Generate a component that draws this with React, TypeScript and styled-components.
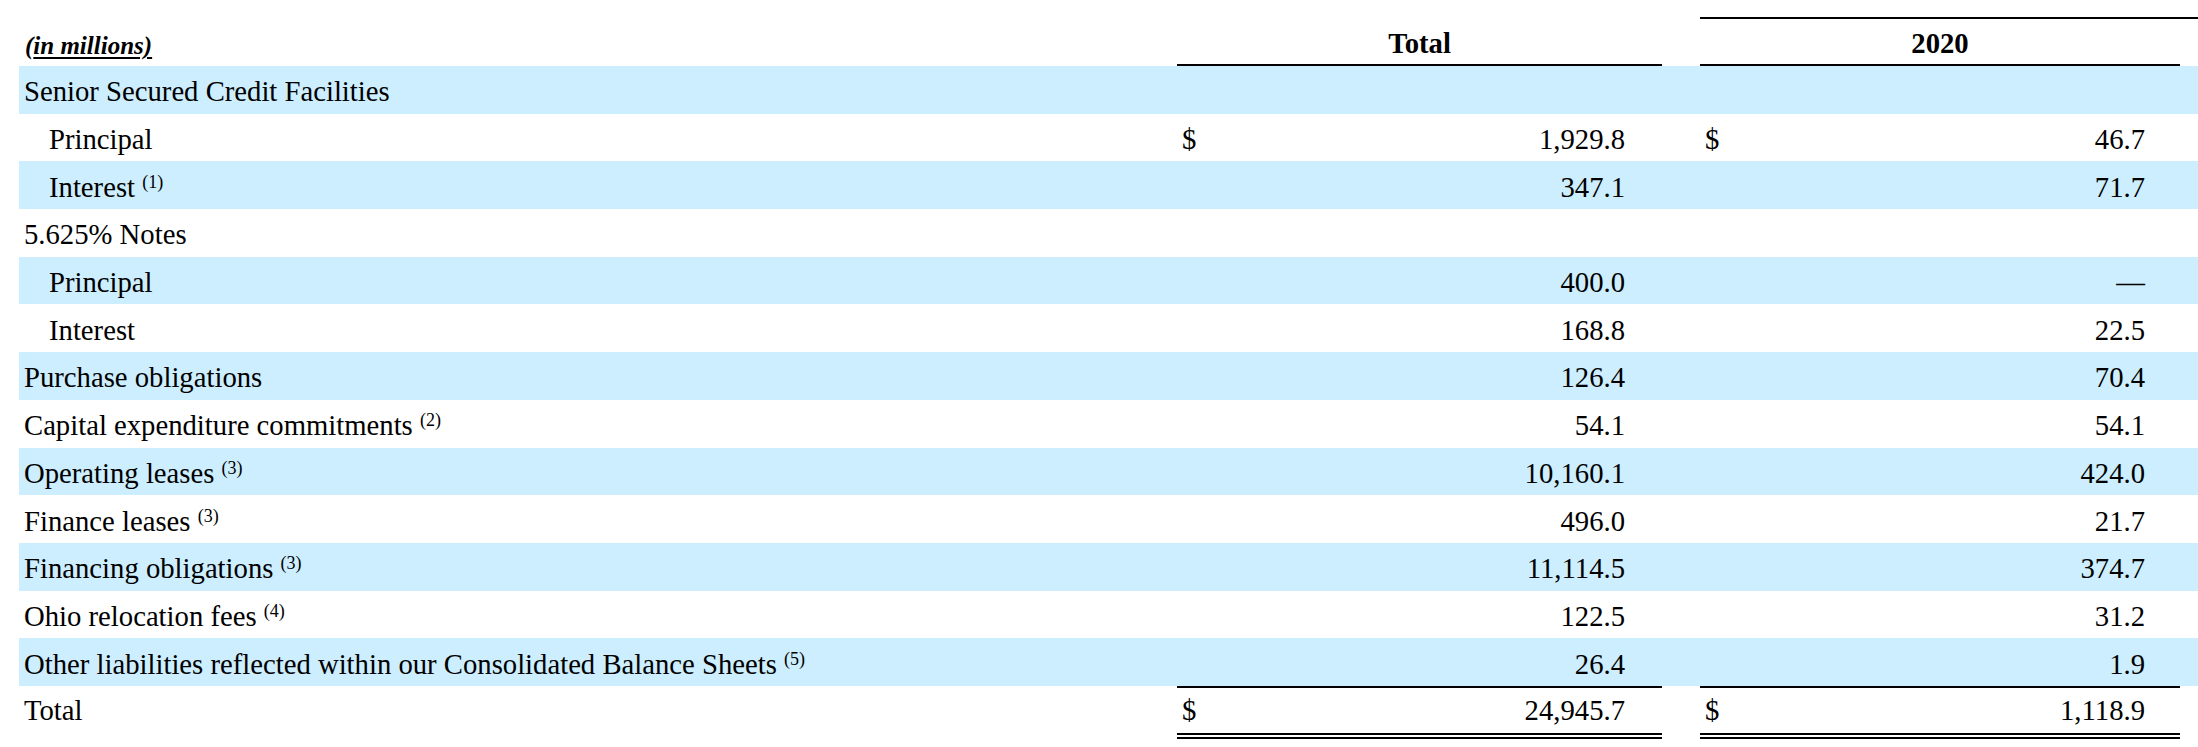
import React from "react";
import styled, { createGlobalStyle } from "styled-components";

type Line = {
  label: string;
  note?: number;
  indent?: boolean;
  dollar?: boolean;
  total?: string;
  y2020?: string;
};

const lines: Line[] = [
  { label: "Senior Secured Credit Facilities" },
  { label: "Principal", indent: true, dollar: true, total: "1,929.8", y2020: "46.7" },
  { label: "Interest", note: 1, indent: true, total: "347.1", y2020: "71.7" },
  { label: "5.625% Notes" },
  { label: "Principal", indent: true, total: "400.0", y2020: "—" },
  { label: "Interest", indent: true, total: "168.8", y2020: "22.5" },
  { label: "Purchase obligations", total: "126.4", y2020: "70.4" },
  { label: "Capital expenditure commitments", note: 2, total: "54.1", y2020: "54.1" },
  { label: "Operating leases", note: 3, total: "10,160.1", y2020: "424.0" },
  { label: "Finance leases", note: 3, total: "496.0", y2020: "21.7" },
  { label: "Financing obligations", note: 3, total: "11,114.5", y2020: "374.7" },
  { label: "Ohio relocation fees", note: 4, total: "122.5", y2020: "31.2" },
  { label: "Other liabilities reflected within our Consolidated Balance Sheets", note: 5, total: "26.4", y2020: "1.9" },
];

const GlobalStyle = createGlobalStyle`
  html, body {
    margin: 0;
    padding: 0;
    background: #ffffff;
    overflow: hidden;
  }
  body {
    font-family: "Liberation Serif", "Times New Roman", serif;
    color: #000000;
  }
`;

const COLUMNS = "1158px 485px 38px 480px 38px 480px";

const Page = styled.div`
  width: max-content;
  padding: 17px 0 0 19px;
`;

const HeaderRow = styled.div`
  display: grid;
  grid-template-columns: ${COLUMNS};
  height: 49px;
`;

const UnitsCell = styled.div`
  display: flex;
  align-items: flex-end;
  padding: 0 0 6px 6px;
  font-size: 25px;
  font-weight: bold;
  font-style: italic;
`;

const Underlined = styled.span`
  text-decoration: underline;
  text-decoration-thickness: 2px;
  text-underline-offset: 3px;
`;

const HeadCell = styled.div<{ $top?: boolean; $bottom?: boolean }>`
  box-sizing: border-box;
  height: 49px;
  display: flex;
  align-items: flex-end;
  justify-content: center;
  padding-bottom: 4px;
  font-size: 28.7px;
  font-weight: bold;
  border-top: ${(p) => (p.$top ? "2px solid #000" : "none")};
  border-bottom: ${(p) => (p.$bottom ? "2px solid #000" : "none")};
`;

const Row = styled.div<{ $band?: boolean }>`
  box-sizing: border-box;
  display: grid;
  grid-template-columns: ${COLUMNS};
  height: 47.7px;
  padding-top: 4px;
  background: ${(p) => (p.$band ? "#cceeff" : "transparent")};
  font-size: 28.7px;
`;

const TotalRow = styled(Row)`
  height: 53px;
  padding-top: 0;
`;

const Label = styled.div<{ $indent?: boolean; $total?: boolean }>`
  display: flex;
  align-items: center;
  white-space: nowrap;
  padding-left: ${(p) => (p.$indent ? 30 : 5)}px;
  padding-top: ${(p) => (p.$total ? 2 : 0)}px;
  padding-bottom: ${(p) => (p.$total ? 6 : 0)}px;
`;

const LabelText = styled.span`
  display: inline;
`;

const Amount = styled.div<{ $right: number; $total?: boolean }>`
  box-sizing: border-box;
  display: flex;
  align-items: center;
  justify-content: space-between;
  padding: 0 ${(p) => p.$right}px 0 5px;
  border-top: ${(p) => (p.$total ? "2px solid #000" : "none")};
  border-bottom: ${(p) => (p.$total ? "6px double #000" : "none")};
`;

const Note = styled.sup`
  font-size: 18px;
  line-height: 0;
  vertical-align: 9px;
`;

const Spacer = styled.div``;

const AmountCells: React.FC<{ line: Line; total?: boolean }> = ({ line, total }) => (
  <>
    <Amount $right={37} $total={total}>
      <span>{line.dollar ? "$" : ""}</span>
      <span>{line.total ?? ""}</span>
    </Amount>
    <Spacer />
    <Amount $right={35} $total={total}>
      <span>{line.dollar ? "$" : ""}</span>
      <span>{line.y2020 ?? ""}</span>
    </Amount>
    <Spacer />
    <Spacer />
  </>
);

export default function App() {
  return (
    <>
      <GlobalStyle />
      <Page>
        <HeaderRow>
          <UnitsCell>
            <span>
              (<Underlined>in millions)</Underlined>
            </span>
          </UnitsCell>
          <HeadCell $bottom>Total</HeadCell>
          <Spacer />
          <HeadCell $top $bottom>2020</HeadCell>
          <HeadCell $top />
          <HeadCell $top $bottom />
        </HeaderRow>

        {lines.map((line, i) => (
          <Row key={i} $band={i % 2 === 0}>
            <Label $indent={line.indent}>
              <LabelText>
                {line.label}
                {line.note !== undefined && <> <Note>({line.note})</Note></>}
              </LabelText>
            </Label>
            <AmountCells line={line} />
          </Row>
        ))}

        <TotalRow>
          <Label $total>
            <LabelText>Total</LabelText>
          </Label>
          <AmountCells total line={{ label: "Total", dollar: true, total: "24,945.7", y2020: "1,118.9" }} />
        </TotalRow>
      </Page>
    </>
  );
}
